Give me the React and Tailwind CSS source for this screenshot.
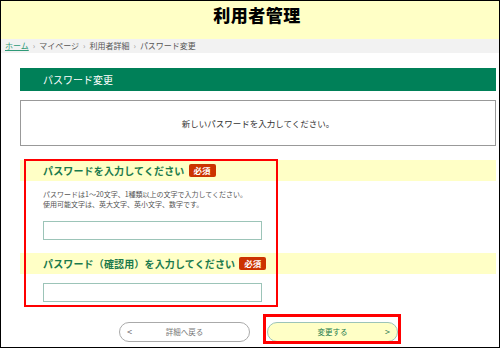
const FONT = { fontFamily: '"Noto Sans CJK JP", "Noto Sans", sans-serif' };

function Required() {
  return (
    <span className="ml-[4px] inline-flex h-[13px] items-center rounded-[2px] bg-[#cc3300] px-[5px] text-[8.5px] font-bold leading-none text-white">
      必須
    </span>
  );
}

function FieldTitle({ children }) {
  return (
    <div className="flex h-[21px] items-center bg-[#ffffc6] pl-[23px]">
      <span className="text-[10px] font-bold leading-none tracking-[0.15px] text-[#1b7a4c]">{children}</span>
      <Required />
    </div>
  );
}

export default function App() {
  return (
    <div style={FONT} className="relative h-[348px] w-[500px] overflow-hidden border border-black bg-white">
      <header className="flex h-[38px] items-start justify-center bg-[#ffffc6] pl-[14px] pt-[3px]">
        <h1 className="text-[17px] font-black leading-[22px] tracking-[0.5px] text-black">利用者管理</h1>
      </header>

      <nav className="flex h-[14px] items-center gap-[4px] bg-[#f2f2f2] pl-[4px] text-[8px] leading-none text-[#555]">
        <span className="text-[#2f9a78] underline">ホーム</span>
        <span className="text-[#999]">›</span>
        <span>マイページ</span>
        <span className="text-[#999]">›</span>
        <span>利用者詳細</span>
        <span className="text-[#999]">›</span>
        <span>パスワード変更</span>
      </nav>

      <main className="ml-[19px] mr-[3px] mt-[15px]">
        <div className="flex h-[23px] items-center bg-[#008058] pl-[23px] text-[10px] text-white">
          パスワード変更
        </div>

        <div className="mt-[9px] flex h-[46px] items-center justify-center border border-[#999] text-[8.5px] text-[#333]">
          新しいパスワードを入力してください。
        </div>

        <section className="mt-[14px]">
          <FieldTitle>パスワードを入力してください</FieldTitle>
          <div className="pl-[23px] pt-[8px] text-[7px] leading-[10px] text-[#555]">
            <p>パスワードは1～20文字、1種類以上の文字で入力してください。</p>
            <p>使用可能文字は、英大文字、英小文字、数字です。</p>
          </div>
          <input className="ml-[23px] mt-[12px] block h-[19px] w-[219px] border border-[#9cc4b8] bg-white" />

          <div className="mt-[13px]">
            <FieldTitle>パスワード（確認用）を入力してください</FieldTitle>
          </div>
          <input className="ml-[23px] mt-[9px] block h-[19px] w-[219px] border border-[#9cc4b8] bg-white" />
        </section>

        <div className="mt-[20px] flex gap-[17px] pl-[99px]">
          <button className="relative flex h-[20px] w-[131px] items-center justify-center rounded-full border border-[#aaa] bg-white text-[7.5px] text-[#777]">
            <span className="absolute left-[7px] text-[9px] text-[#666]">&lt;</span>
            詳細へ戻る
          </button>
          <button className="relative flex h-[20px] w-[131px] items-center justify-center rounded-full border border-[#9cc4b8] bg-[#ffffc6] text-[7.5px] text-[#1b7a4c]">
            変更する
            <span className="absolute right-[7px] text-[9px] text-[#1b7a4c]">&gt;</span>
          </button>
        </div>
      </main>

      <div className="pointer-events-none absolute left-[23px] top-[158px] h-[148px] w-[254px] border-2 border-[#ff0000]" />
      <div className="pointer-events-none absolute left-[262px] top-[313px] h-[30px] w-[138px] border-[3px] border-[#ff0000]" />
    </div>
  );
}
